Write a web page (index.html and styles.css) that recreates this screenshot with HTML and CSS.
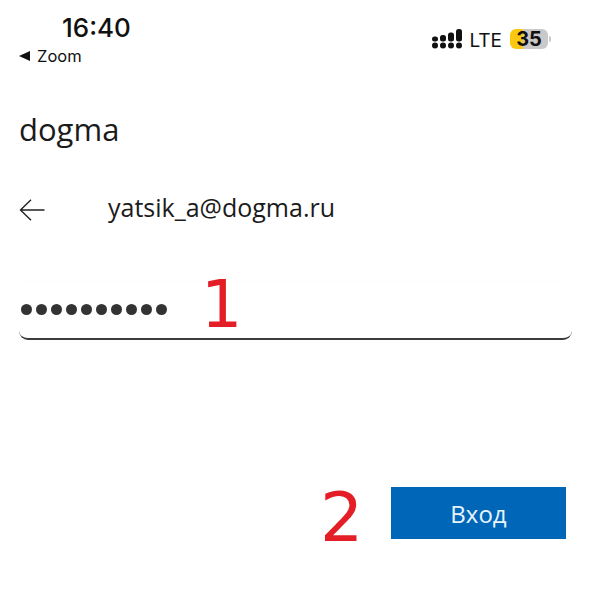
FILE: index.html
```html
<!DOCTYPE html>
<html lang="ru">
<head>
<meta charset="utf-8">
<title>Вход</title>
<link rel="stylesheet" href="styles.css">
</head>
<body>
<div class="page">
  <header class="status">
    <div class="status-left">
      <div class="time">16:40</div>
      <div class="back-app">
        <svg class="back-tri" width="11" height="10" viewBox="0 0 11 10"><path d="M0 5 11 0V10Z" fill="#111"/></svg>
        <span>Zoom</span>
      </div>
    </div>
    <div class="status-right">
      <svg class="signal" width="30" height="20" viewBox="0 0 30 20" fill="#111">
        <circle cx="3" cy="16.5" r="3"/><circle cx="11" cy="16.5" r="3"/><circle cx="19" cy="16.5" r="3"/><circle cx="27" cy="16.5" r="3"/>
        <rect x="0" y="7.5" width="6" height="5" rx="2.5"/><rect x="8" y="6" width="6" height="6.5" rx="2.5"/><rect x="16" y="3.5" width="6" height="9" rx="2.5"/><rect x="24" y="0" width="6" height="12.5" rx="2.5"/>
      </svg>
      <span class="lte">LTE</span>
      <div class="battery"><span class="battery-level">35</span></div>
      <span class="battery-cap"></span>
    </div>
  </header>

  <main class="form">
    <div class="brand">dogma</div>
    <div class="identity">
      <svg class="arrow" width="26" height="22" viewBox="0 0 26 22" fill="none" stroke="#222" stroke-width="1.4"><path d="M25.5 11H1.5M12 .8 1.5 11 12 21.2"/></svg>
      <span class="email">yatsik_a@dogma.ru</span>
    </div>
    <div class="field">
      <div class="dots">
        <i></i><i></i><i></i><i></i><i></i><i></i><i></i><i></i><i></i><i></i>
      </div>
      <span class="mark mark-one">1</span>
    </div>
    <div class="actions">
      <span class="mark mark-two">2</span>
      <button class="submit" type="button">Вход</button>
    </div>
  </main>
</div>
</body>
</html>
```
FILE: styles.css
```css
* { box-sizing: border-box; }
html, body { margin: 0; padding: 0; }
body {
  width: 590px;
  height: 590px;
  background: #fff;
  color: #1b1b1b;
  font-family: "Open Sans", "Liberation Sans", sans-serif;
  overflow: hidden;
}
.page { height: 590px; display: flex; flex-direction: column; }

.status {
  height: 70px;
  padding: 12px 39px 0 19px;
  display: flex;
  justify-content: space-between;
  align-items: flex-start;
}
.status-left { display: flex; flex-direction: column; }
.time {
  margin-left: 43px;
  font-family: "Inter", sans-serif;
  font-size: 26px;
  font-weight: 500;
  line-height: 32px;
  color: #111;
}
.back-app {
  display: flex;
  align-items: center;
  gap: 7px;
  height: 24px;
  font-family: "Inter", sans-serif;
  font-size: 16.5px;
  color: #111;
}
.status-right { display: flex; align-items: center; margin-top: 17px; height: 20px; }
.signal { display: block; }
.lte {
  margin-left: 7px;
  padding-top: 3px;
  font-family: "Inter", sans-serif;
  font-size: 19px;
  font-weight: 400;
  line-height: 20px;
  color: #111;
}
.battery {
  margin-left: 8px;
  width: 38px;
  height: 20px;
  border-radius: 6px;
  background: linear-gradient(90deg, #fbc70f 0 35%, #c9c9c9 35% 100%);
  text-align: center;
}
.battery-level {
  font-family: "Inter", sans-serif;
  font-size: 20px;
  font-weight: 700;
  line-height: 20px;
  color: #111;
  display: block;
}
.battery-cap {
  width: 2px;
  height: 6px;
  margin-left: 1px;
  border-radius: 0 2px 2px 0;
  background: #c9c9c9;
}

.form { flex: 1; padding: 0 18px 0 19px; display: flex; flex-direction: column; }
.brand { margin-top: 37px; font-size: 31px; line-height: 44px; color: #1b1b1b; }
.identity {
  margin-top: 35px;
  height: 44px;
  display: flex;
  align-items: center;
  position: relative;
}
.arrow { display: block; margin-top: 4px; }
.email { margin-left: 63px; font-size: 25px; line-height: 30px; color: #1b1b1b; margin-top: -2px; }
.field {
  position: relative;
  margin-top: 50px;
  width: 553px;
  height: 60px;
  border-top: 1px solid #fdfdfd;
  border-bottom: 2px solid #3c3c3c;
  border-radius: 9px;
  display: flex;
  align-items: center;
}
.dots { display: flex; gap: 4px; margin: 0 0 0 2px; padding-top: 0; }
.dots i { display: block; width: 11px; height: 11px; border-radius: 50%; background: #333; }
.mark {
  position: absolute;
  color: #e31e26;
  font-family: "DejaVu Sans", sans-serif;
  line-height: 72px;
}
.mark-one { left: 182px; top: -12px; font-size: 65px; font-weight: 500; }
.mark-two { left: -71px; top: -5px; font-size: 68px; }
.actions { margin-top: 147px; margin-left: 372px; position: relative; }
.submit {
  display: block;
  width: 175px;
  height: 52px;
  border: 0;
  border-radius: 0;
  background: #0067b8;
  color: #e8f3fb;
  font-family: "Open Sans", sans-serif;
  font-size: 24px;
  padding: 0;
}
```
